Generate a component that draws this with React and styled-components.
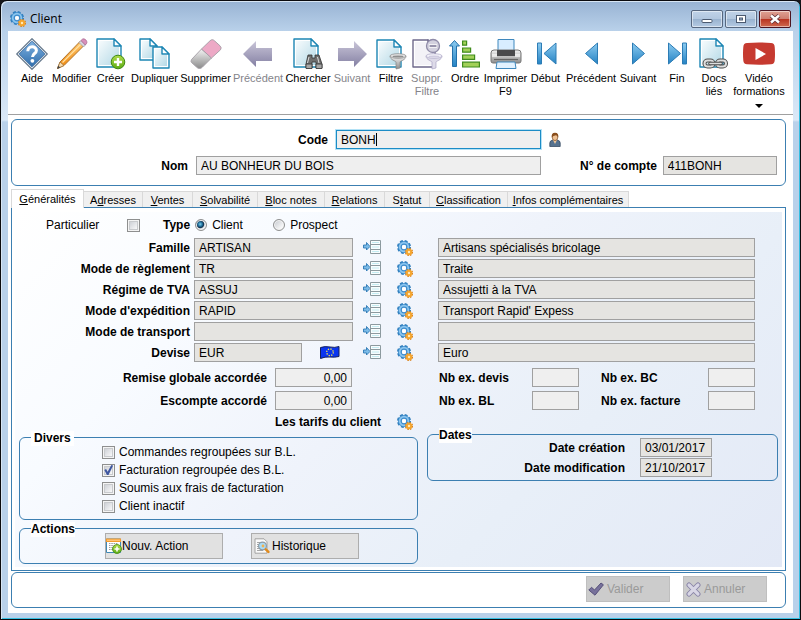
import React from "react";
import styled, { createGlobalStyle, css } from "styled-components";

const LINE = "#3c7fb1";

const GlobalStyle = createGlobalStyle`
  * { box-sizing: border-box; }
  html { background: #17171b; }
  body { margin: 0; font: 12px/14px "Liberation Sans", Arial, sans-serif; color: #000; }
  button, input { font: inherit; color: inherit; margin: 0; }
  svg { display: block; flex: none; }
`;

/* ---------- window frame ---------- */

const Frame = styled.div`
  min-height: 100vh;
  display: flex;
  flex-direction: column;
  padding: 0 6px 6px;
  border: 1px solid #0b0b0e;
  border-radius: 7px 7px 0 0;
  background: linear-gradient(#98b3d3 0, #b9d1ea 30px, #dae8f7 119px, #b9d1ea 121px);
  box-shadow: inset 1px 1px 0 #d8e6f4, inset -1px -1px 0 #35bfe2;
`;

const TitleBar = styled.header`
  display: flex;
  align-items: center;
  gap: 4px;
  height: 30px;
  padding: 6px 3px 0;
`;

const Title = styled.h1`
  flex: 1;
  margin: 0;
  font: 12px/16px "Open Sans", "Noto Sans", sans-serif;
`;

const CaptionButtons = styled.div`
  display: flex;
  gap: 2px;
`;

const CaptionButton = styled.button`
  display: grid;
  place-items: center;
  width: 32px;
  height: 18px;
  padding: 0;
  border: 1px solid ${(p) => (p.$close ? "#4c1420" : "#56677f")};
  border-radius: 2px;
  box-shadow: inset 0 0 0 1px rgba(255, 255, 255, 0.5);
  background: ${(p) =>
    p.$close
      ? "linear-gradient(#e0a193 0, #cf7f70 48%, #b8321f 50%, #cf6a4f 100%)"
      : "linear-gradient(#c0d3e8 0, #b2c7df 48%, #98b2cf 50%, #b4cae3 100%)"};
`;

const Client = styled.main`
  flex: 1;
  display: flex;
  flex-direction: column;
  margin: 0 1px;
  background: #fff;
`;

/* ---------- toolbar ---------- */

const Toolbar = styled.nav`
  display: flex;
  align-items: flex-start;
  min-height: 84px;
  padding: 7px 5px 0;
  border-bottom: 1px solid #a0a0a0;
`;

const Tool = styled.button`
  display: flex;
  flex-direction: column;
  align-items: center;
  flex: none;
  width: ${(p) => p.$w}px;
  padding: 0;
  border: 0;
  background: none;
  font-size: 11px;
  line-height: 13px;
  white-space: nowrap;
  &:disabled { color: #84848a; }
`;

const ToolLabel = styled.span`
  margin-top: 2px;
  white-space: pre-line;
`;

const DropArrow = styled.span`
  margin-top: 6px;
  border: 4px solid transparent;
  border-top-color: #000;
  border-bottom: 0;
`;

/* ---------- shared controls ---------- */

const Field = styled.input`
  display: block;
  width: ${(p) => (p.$w ? p.$w + "px" : "100%")};
  min-width: 0;
  height: 19px;
  padding: 0 4px;
  border: 1px solid #a0a0a0;
  border-radius: 0;
  outline: 0;
  background: ${(p) => (p.$locked ? "#e5e4e1" : "#efefef")};
  text-align: ${(p) => p.$align || "left"};
  ${(p) =>
    p.$active &&
    css`
      border-color: #1c8cc6;
      box-shadow: 0 0 0 1px #b4e2f6;
    `}
`;

const Caption = styled.label`
  width: ${(p) => (p.$w ? p.$w + "px" : "auto")};
  flex: none;
  font-weight: bold;
  text-align: ${(p) => p.$align || "right"};
  white-space: nowrap;
`;

const IconButton = styled.button`
  display: grid;
  place-items: center;
  padding: 0;
  border: 0;
  background: none;
`;

const Check = styled.input`
  appearance: none;
  flex: none;
  width: 13px;
  height: 13px;
  border: 1px solid #8e8f8f;
  background: linear-gradient(135deg, #c3c7cd, #f7f7f8 80%);
  box-shadow: inset 0 0 0 1px #f4f4f4, inset 0 0 0 2px #c8cacd;
  &:checked::before {
    content: "";
    display: block;
    width: 11px;
    height: 11px;
    background: #3f57a0;
    clip-path: polygon(12% 50%, 28% 42%, 42% 66%, 76% 4%, 92% 8%, 50% 96%, 36% 96%);
  }
`;

const Radio = styled.input`
  appearance: none;
  flex: none;
  width: 12px;
  height: 12px;
  border: 1px solid #8e8f8f;
  border-radius: 50%;
  background: linear-gradient(135deg, #c3c7cd, #fafafa 80%);
  box-shadow: inset 0 0 0 1px #f4f4f4;
  &:checked {
    background: radial-gradient(circle at 42% 42%, #7cd0ee 0, #1d6a96 28%, #12324d 42%, #e4e8ec 56%);
  }
`;

const Option = styled.label`
  display: flex;
  align-items: center;
  gap: 4px;
  height: 18px;
  white-space: nowrap;
`;

const PushButton = styled.button`
  display: flex;
  align-items: center;
  width: ${(p) => p.$w}px;
  height: 26px;
  gap: ${(p) => p.$gap || 0}px;
  padding: 0 0 0 ${(p) => p.$pad || 0}px;
  border: 1px solid #adadad;
  background: #e1e1e1;
  &:disabled {
    border-color: #bfbfbf;
    background: #ccc;
    color: #9a9a9a;
  }
`;

/* ---------- identity panel ---------- */

const Identity = styled.section`
  display: grid;
  gap: 7px;
  margin: 4px 7px 3px 3px;
  padding: 10px 8px 10px 0;
  border: 1px solid ${LINE};
  border-radius: 6px;
`;

const IdentityRow = styled.div`
  display: flex;
  align-items: center;
  gap: 8px;
`;

const Account = styled.div`
  display: flex;
  flex: 1;
  align-items: center;
  gap: 6px;
  margin-left: 31px;
`;

const CodeBox = styled.span`
  position: relative;
`;

const TextCursor = styled.span`
  position: absolute;
  left: 40px;
  top: 3px;
  width: 1px;
  height: 13px;
  background: #000;
`;

/* ---------- tabs ---------- */

const TabList = styled.div`
  display: flex;
  align-items: flex-end;
  margin: 0 7px 0 3px;
`;

const Tab = styled.button`
  width: ${(p) => p.$w}px;
  height: 16px;
  padding: 0;
  border: 1px solid #d9d9d9;
  border-width: 1px 1px 0 0;
  background: #f0f0f0;
  font-size: 11px;
  line-height: 14px;
  white-space: nowrap;
  &[aria-selected="true"] {
    position: relative;
    height: 19px;
    margin-bottom: -1px;
    border-left-width: 1px;
    background: #fff;
  }
`;

const Panel = styled.section`
  flex: 1;
  display: flex;
  margin: 0 7px 0 3px;
  padding: 4px 3px 3px;
  border: 1px solid ${LINE};
`;

const Sheet = styled.div`
  flex: 1;
  background: linear-gradient(135deg, #fff 0, #f8fbff 25%, #eff3fb 48%, #e8eff8 70%, #e3e9f6 100%);
`;

const KindRow = styled.div`
  display: flex;
  align-items: center;
  height: 20px;
  margin: 3px 0;
  padding-left: 31px;
`;

const Particular = styled.label`
  display: flex;
  align-items: center;
  justify-content: space-between;
  width: 94px;
  margin-right: 23px;
`;

const Kinds = styled.div`
  display: grid;
  grid-template-columns: 78px auto;
  margin-left: 5px;
  & > label { gap: 5px; }
`;

const Lookups = styled.div`
  display: grid;
  gap: 2px;
`;

const LookupRow = styled.div`
  display: grid;
  grid-template-columns: 175px 4px 159px 10px 18px 16px 16px 25px 1fr;
  align-items: center;
  padding-right: 27px;
  & > :nth-child(2) { grid-column: 3; }
  & > :nth-child(3) { grid-column: 5; }
  & > :nth-child(4) { grid-column: 7; }
  & > :nth-child(5) { grid-column: 9; }
`;

const CodeCell = styled.div`
  display: flex;
  align-items: center;
  gap: 18px;
`;

const Columns = styled.div`
  display: grid;
  grid-template-columns: 412px 1fr;
  align-items: start;
  padding-top: 6px;
`;

const Amounts = styled.div`
  display: grid;
  grid-template-columns: 252px 77px;
  gap: 4px 8px;
  align-items: center;
`;

const Prices = styled.div`
  display: flex;
  align-items: center;
  gap: 16px;
  height: 16px;
  margin: 4px 0 7px 260px;
`;

const Copies = styled.div`
  display: grid;
  grid-template-columns: 93px 47px 22px 1fr 47px;
  row-gap: 4px;
  align-items: center;
  margin: 0 27px 24px 12px;
  & > :nth-child(4n + 3) { grid-column: 4; }
`;

const Group = styled.fieldset`
  position: relative;
  min-width: 0;
  margin: 0 ${(p) => p.$right}px 8px ${(p) => p.$left || 0}px;
  padding: ${(p) => p.$pad};
  border: 1px solid ${LINE};
  border-radius: 6px;
  &:last-child { margin-bottom: 2px; }
`;

const Legend = styled.legend`
  position: absolute;
  top: -7px;
  left: 11px;
  padding: 0 ${(p) => (p.$flush ? 0 : 3)}px;
  background: #fff;
  font-weight: bold;
  line-height: 15px;
`;

const ButtonRow = styled.div`
  display: flex;
  gap: 28px;
`;

const DateGrid = styled.div`
  display: grid;
  grid-template-columns: auto 72px;
  justify-content: end;
  align-items: center;
  gap: 1px 15px;
`;

const Footer = styled.footer`
  display: flex;
  justify-content: flex-end;
  gap: 13px;
  margin: 1px 7px 5px 3px;
  padding: 3px 18px 5px;
  border: 1px solid ${LINE};
  border-radius: 6px;
`;

/* ---------- drawings ---------- */

const Gradients = styled.svg`
  position: absolute;
`;

function Defs() {
  const ramp = (id, a, b, diagonal) => (
    <linearGradient id={id} x1="0" y1="0" x2={diagonal ? 1 : 0} y2="1">
      <stop offset="0" stopColor={a} />
      <stop offset="1" stopColor={b} />
    </linearGradient>
  );
  return (
    <Gradients width="0" height="0" aria-hidden="true">
      <defs>
        {ramp("paper", "#f6fbfd", "#b4d9e6", true)}
        {ramp("sky", "#8ccbf0", "#2583c4")}
        {ramp("mauve", "#c9c5d8", "#8480a3")}
        {ramp("steel", "#f4f4f4", "#8b8b8b")}
        {ramp("leaf", "#b0dc4c", "#5cab14")}
        {ramp("diamond", "#7fb2e2", "#2f6dab")}
        {ramp("pencil", "#ffca72", "#ee8408")}
      </defs>
    </Gradients>
  );
}

const Svg32 = (props) => <svg width="32" height="32" viewBox="0 0 32 32" aria-hidden="true" {...props} />;

const Paper = ({ x = 0, y = 0, w = 24, h = 28, stroke = "#1d86b4", fill = "url(#paper)" }) => (
  <g stroke={stroke} strokeWidth="1.4" strokeLinejoin="round">
    <path d={`M${x} ${y}h${w - 7}l7 7v${h - 7}h${-w}z`} fill="#fff" />
    <path d={`M${x + 2} ${y + 2}h${w - 9}v6h5v${h - 10}h${4 - w}z`} fill={fill} stroke="none" />
    <path d={`M${x + w - 7} ${y}v7h7z`} fill="#fff" />
  </g>
);

const Funnel = ({ light }) => (
  <g stroke={light ? "#aaa5c4" : "#858585"} strokeWidth=".7">
    <path d="M15 18c0 4 6 5 6 6v7l4-1v-6c0-1 6-2 6-6z" fill={light ? "#dedbe9" : "url(#steel)"} />
    <ellipse cx="23" cy="18" rx="8" ry="2.3" fill={light ? "#f4f3fa" : "#e4e4e4"} />
    <ellipse cx="23" cy="18.4" rx="5.5" ry="1" fill={light ? "#d0cce0" : "#8f8f8f"} stroke="none" />
  </g>
);

const icons = {
  help: (
    <Svg32>
      <path d="M16 .8 31.2 16 16 31.2.8 16z" fill="#fff" stroke="#6d7f92" strokeLinejoin="round" strokeWidth="1.4" />
      <path d="M16 3.2 28.8 16 16 28.8 3.2 16z" fill="url(#diamond)" stroke="#3a6ea5" />
      <path d="M11.8 13.2c0-5.8 8.6-5.6 8.6-.8 0 3.2-3.9 3-3.9 6.6" fill="none" stroke="#fff" strokeWidth="3" />
      <circle cx="16.4" cy="22.8" r="1.9" fill="#fff" />
    </Svg32>
  ),
  edit: (
    <Svg32>
      <path d="M1.5 30.5 4 24 24 3.5l4 4L8 27.5z" fill="url(#pencil)" stroke="#a86a20" strokeWidth=".9" strokeLinejoin="round" />
      <path d="M6.5 24.5 25 6" stroke="#ffe0a0" strokeWidth="1.3" />
      <path d="M1.5 30.5 4 24l4 3.5z" fill="#f7dcb0" stroke="#94703e" strokeWidth=".7" />
      <path d="m1.2 30.8 1-3.2 2.1 2.1z" fill="#444" />
      <path d="m23 4.500 2-2 4.500 4.500-2 2z" fill="#d5d5df" stroke="#8d8d9b" strokeWidth=".6" />
      <path d="m25 2.500 1.400-1.300c2-1.500 5.600 2 4.200 4.200L29.300 7z" fill="#d890bb" stroke="#a2608a" strokeWidth=".7" />
    </Svg32>
  ),
  create: (
    <Svg32>
      <Paper x={2} y={1} />
      <circle cx="23" cy="24" r="6.8" fill="url(#leaf)" stroke="#3f8a12" />
      <path d="M23 20v8M19 24h8" stroke="#fff" strokeWidth="2.4" />
    </Svg32>
  ),
  duplicate: (
    <Svg32>
      <Paper x={1} y={1} w={17} h={21} />
      <Paper x={14} y={9} w={16} h={21} />
    </Svg32>
  ),
  erase: (
    <Svg32>
      <g strokeLinejoin="round" stroke="#a39da5" strokeWidth=".9">
        <path d="M1.5 21.5 11.5 11l10 9-9 9c-2 2-4 2-6 0l-5-4.5q-1-1 0-3z" fill="url(#steel)" />
        <path d="M11.5 11 20 2.8c1.5-1.5 3-1.5 4.5 0l5.500 5q2 2 .5 4l-9 8.200z" fill="#eda9c6" />
      </g>
    </Svg32>
  ),
  back: (
    <Svg32>
      <path d="M1 16 14 3v7h16v13H14v6z" fill="url(#mauve)" />
    </Svg32>
  ),
  forward: (
    <Svg32>
      <path d="M31 16 18 3v7H2v13h16v6z" fill="url(#mauve)" />
    </Svg32>
  ),
  search: (
    <Svg32>
      <Paper x={2} y={1} />
      <g fill="#6e6e6e" stroke="#333" strokeWidth=".8">
        <path d="M16 17h4v3h3v-3h4l3 9v4h-6v-6h-4v6h-6v-4z" />
        <path d="M14 26h6v4.500h-6zM24 26h6v4.500h-6z" fill="#a6a6a6" />
      </g>
      <path d="m17 19-1.500 6M25.500 19l1.500 6" stroke="#ddd" />
    </Svg32>
  ),
  filter: (
    <Svg32>
      <Paper x={2} y={2} w={24} h={27} />
      <Funnel />
    </Svg32>
  ),
  unfilter: (
    <Svg32>
      <Paper x={2} y={2} w={22} h={27} stroke="#6f6a8c" fill="#f3f2f7" />
      <Funnel light />
      <circle cx="22" cy="8" r="6.5" fill="#d3d1df" stroke="#8f8ba8" strokeWidth="1.3" />
      <path d="M18 8h8" stroke="#fff" strokeWidth="3.4" />
      <path d="M18.500 8h7" stroke="#7e7999" strokeWidth="1.6" />
    </Svg32>
  ),
  order: (
    <Svg32>
      <path d="M5.5 2.5 10.500 8h-3v20.500h-4V8h-3z" fill="url(#sky)" stroke="#2371ab" />
      <path
        d="M13.600 3h4v4.200h-4zM13.600 10h8v4.200h-8zM13.600 17h12v4.400h-12zM13.600 24.200h16.800V29H13.600z"
        fill="#a2d058"
        stroke="#3f8b1c"
        strokeWidth="1.2"
      />
    </Svg32>
  ),
  print: (
    <Svg32>
      <path d="M8 1.500h16V13H8z" fill="#d8edff" stroke="#3f88bd" />
      <path d="M4 12h24q3 0 3 3v8q0 2-2 2H3q-2 0-2-2v-8q0-3 3-3z" fill="url(#steel)" stroke="#777" />
      <path d="M7 12h18v6H7z" fill="#4a4a4c" />
      <path d="M2 16h5v3H2zM25 16h5v3h-5z" fill="#fff" opacity=".6" />
      <path d="M7 24h18l1 6.500H6z" fill="#e2f2ff" stroke="#3f88bd" />
      <path d="M4 21.500h24" stroke="#666" strokeWidth="1.2" />
    </Svg32>
  ),
  first: (
    <Svg32>
      <path d="M7.500 5h4v21h-4zM26 5v21L14 15.500z" fill="url(#sky)" stroke="#2c7cb5" />
    </Svg32>
  ),
  previous: (
    <Svg32>
      <path d="M22.500 5v21l-12-10.500z" fill="url(#sky)" stroke="#2c7cb5" />
    </Svg32>
  ),
  next: (
    <Svg32>
      <path d="M10.500 5v21l12-10.500z" fill="url(#sky)" stroke="#2c7cb5" />
    </Svg32>
  ),
  last: (
    <Svg32>
      <path d="M21.500 5h4v21h-4zM7.500 5v21l12-10.500z" fill="url(#sky)" stroke="#2c7cb5" />
    </Svg32>
  ),
  docs: (
    <Svg32>
      <Paper x={2} y={1} w={23} />
      <g fill="none" stroke="#4d4d4d" strokeWidth="4">
        <rect x="6.500" y="22.500" width="9" height="6" rx="3" />
        <rect x="19" y="22.500" width="9" height="6" rx="3" />
      </g>
      <g fill="none" stroke="#dedede" strokeWidth="2">
        <rect x="6.500" y="22.500" width="9" height="6" rx="3" />
        <rect x="19" y="22.500" width="9" height="6" rx="3" />
      </g>
      <path d="M12 25.500h11" stroke="#4d4d4d" strokeWidth="3.400" strokeLinecap="round" />
      <path d="M12 25.500h11" stroke="#dedede" strokeWidth="1.600" strokeLinecap="round" />
    </Svg32>
  ),
  video: (
    <Svg32>
      <path
        d="M4 5q12-1 24 0 3.500.2 3.700 4 .6 7 0 13.500Q31.500 26 28 26.300q-12 .8-24 0Q.5 26 .3 22.500-.3 16 .3 9 .500 5.200 4 5z"
        fill="#c63a30"
      />
      <path d="M12.500 10v12L23 16z" fill="#fff" />
    </Svg32>
  ),
};

const Gears = () => (
  <svg width="16" height="16" viewBox="0 0 16 16" aria-hidden="true">
    <circle cx="7" cy="7" r="5.9" fill="none" stroke="#2f7dbb" strokeWidth="2.2" strokeDasharray="2.8 1.83" />
    <circle cx="7" cy="7" r="4.1" fill="none" stroke="#3d8ccc" strokeWidth="3.8" />
    <circle cx="7" cy="7" r="4.3" fill="none" stroke="#8cc6ef" strokeWidth="1.7" />
    <circle cx="7" cy="7" r="2" fill="#fff" />
    <circle cx="12" cy="12" r="3.3" fill="none" stroke="#d9801a" strokeWidth="1.6" strokeDasharray="1.5 1.09" />
    <circle cx="12" cy="12" r="2.2" fill="#ffe9b8" stroke="#f5a52d" strokeWidth="2" />
  </svg>
);

const ListIcon = () => (
  <svg width="18" height="15" viewBox="0 0 18 15" aria-hidden="true">
    <path d="M.5 5h3V2.500L7 6.500 3.500 10V8h-3z" fill="#7dbce8" stroke="#2d78b4" strokeWidth=".9" />
    <path d="M7.500.5h10v13h-10z" fill="#f8fdfe" stroke="#8c9a9f" />
    <path d="M8 4.500h9M8 9.500h9" stroke="#8c9a9f" />
    <path d="M9 2.500h7M9 7h7M9 11.500h7" stroke="#c4ecf2" />
  </svg>
);

const EuFlag = () => (
  <svg width="20" height="13" viewBox="0 0 20 13" role="img" aria-label="Union européenne">
    <path d="M.5 1.500Q5 0 10 1t9-.5v10q-4 1-9 .5t-9.500 1.500z" fill="#0a35f0" stroke="#15205c" />
    <circle cx="10" cy="6.300" r="3.300" fill="none" stroke="#f5e34a" strokeWidth="1.300" strokeDasharray="1.300 1.290" />
  </svg>
);

const Person = () => (
  <svg width="12" height="16" viewBox="0 0 12 16" aria-hidden="true">
    <path d="M.8 14.500V11q0-2.500 3-3h4.400q3 .5 3 3v3.500z" fill="#56728f" stroke="#3a4c63" strokeWidth=".8" />
    <path d="m4 8 2 4 2-4z" fill="#f0c79c" />
    <ellipse cx="6" cy="5" rx="2.800" ry="3.600" fill="#efc193" stroke="#7a4a24" strokeWidth=".7" />
    <path d="M2.800 5.500Q2 .8 6 .8t3.200 4.700Q8.500 3.500 7 3.200q-3 .3-4.200 2.300z" fill="#8a4f1d" />
  </svg>
);

const CalendarPlus = () => (
  <svg width="16" height="16" viewBox="0 0 16 16" aria-hidden="true">
    <path d="M.5 1h14v13.500H.5z" fill="#fff" stroke="#3f87b5" />
    <path d="M0 .5h15V4H0z" fill="#f59b2d" />
    <path d="M1 2.200h13" stroke="#ffd79b" />
    <path d="M3 5.500h9M3 7.500h9M3 9.500h9M3 11.500h5" stroke="#9a9a9a" strokeDasharray="1.500 .8" />
    <circle cx="11" cy="11" r="4.500" fill="url(#leaf)" stroke="#3f8a12" strokeWidth=".8" />
    <path d="M11 8.500v5M8.500 11h5" stroke="#fff" strokeWidth="1.600" />
  </svg>
);

const Preview = () => (
  <svg width="16" height="16" viewBox="0 0 16 16" aria-hidden="true">
    <path d="M1 .8h9l3 3v11.400H1z" fill="#fafafa" stroke="#a2a2a2" />
    <path d="M3 4.500h3M3 6.500h2M3 8.500h2M3 10.500h2M3 12.500h6" stroke="#a6a6a6" />
    <circle cx="8.500" cy="8" r="3.900" fill="#a9dbf6" stroke="#8d9aa4" strokeWidth="1.200" />
    <circle cx="9" cy="8" r="1.400" fill="#f3b14e" />
    <path d="m11.800 11.300 2.600 2.600" stroke="#e08a1d" strokeWidth="2.400" strokeLinecap="round" />
  </svg>
);

const Tick = () => (
  <svg width="16" height="14" viewBox="0 0 16 14" aria-hidden="true">
    <path d="m.8 8 2.700-2.700L6.500 8 13 1l2.400 1.800L7 13.200z" fill="#77719b" stroke="#57517a" strokeLinejoin="round" />
  </svg>
);

const Cross = () => (
  <svg width="15" height="15" viewBox="0 0 15 15" aria-hidden="true">
    <path d="m3 3 9 9M12 3l-9 9" stroke="#8782a6" strokeWidth="5" strokeLinecap="round" />
    <path d="m3 3 9 9M12 3l-9 9" stroke="#d8d6e5" strokeWidth="3.200" strokeLinecap="round" />
  </svg>
);

const CaptionGlyph = ({ kind }) => (
  <svg width="12" height="10" viewBox="0 0 12 10" aria-hidden="true">
    {kind === "min" && <rect x="1" y="5.500" width="10" height="3" rx="1" fill="#fff" stroke="#4b5a70" />}
    {kind === "max" && (
      <>
        <rect x="1.500" y="1.500" width="9" height="7" fill="#fff" stroke="#4b5a70" />
        <rect x="4.500" y="4" width="3" height="2" fill="#9db5d2" stroke="#4b5a70" />
      </>
    )}
    {kind === "close" && (
      <>
        <path d="m2 1.500 8 7M10 1.500l-8 7" stroke="#5b3038" strokeWidth="4" />
        <path d="m2 1.500 8 7M10 1.500l-8 7" stroke="#fff" strokeWidth="2.400" />
      </>
    )}
  </svg>
);

/* ---------- data ---------- */

const tools = [
  { icon: "help", label: "Aide", w: 38 },
  { icon: "edit", label: "Modifier", w: 41 },
  { icon: "create", label: "Créer", w: 37 },
  { icon: "duplicate", label: "Dupliquer", w: 51 },
  { icon: "erase", label: "Supprimer", w: 51 },
  { icon: "back", label: "Précédent", w: 54, off: true },
  { icon: "search", label: "Chercher", w: 46 },
  { icon: "forward", label: "Suivant", w: 42, off: true },
  { icon: "filter", label: "Filtre", w: 36 },
  { icon: "unfilter", label: "Suppr.\nFiltre", w: 36, off: true },
  { icon: "order", label: "Ordre", w: 40 },
  { icon: "print", label: "Imprimer\nF9", w: 41 },
  { icon: "first", label: "Début", w: 39 },
  { icon: "previous", label: "Précédent", w: 52 },
  { icon: "next", label: "Suivant", w: 42 },
  { icon: "last", label: "Fin", w: 36 },
  { icon: "docs", label: "Docs\nliés", w: 38 },
  { icon: "video", label: "Vidéo\nformations", w: 52, menu: true },
];

const tabs = [
  { text: "Généralités", key: 0, w: 73 },
  { text: "Adresses", key: 1, w: 59 },
  { text: "Ventes", key: 0, w: 50 },
  { text: "Solvabilité", key: 0, w: 65 },
  { text: "Bloc notes", key: 0, w: 67 },
  { text: "Relations", key: 0, w: 60 },
  { text: "Statut", key: 1, w: 45 },
  { text: "Classification", key: 0, w: 78 },
  { text: "Infos complémentaires", key: 0, w: 121 },
];

const lookups = [
  { id: "famille", label: "Famille", code: "ARTISAN", text: "Artisans spécialisés bricolage" },
  { id: "reglement", label: "Mode de règlement", code: "TR", text: "Traite" },
  { id: "tva", label: "Régime de TVA", code: "ASSUJ", text: "Assujetti à la TVA" },
  { id: "expedition", label: "Mode d'expédition", code: "RAPID", text: "Transport Rapid' Expess" },
  { id: "transport", label: "Mode de transport", code: "", text: "" },
  { id: "devise", label: "Devise", code: "EUR", text: "Euro", flag: true },
];

const copies = [
  { id: "nb-devis", label: "Nb ex. devis" },
  { id: "nb-bc", label: "Nb ex. BC" },
  { id: "nb-bl", label: "Nb ex. BL" },
  { id: "nb-facture", label: "Nb ex. facture" },
];

const options = [
  { label: "Commandes regroupées sur B.L." },
  { label: "Facturation regroupée des B.L.", on: true },
  { label: "Soumis aux frais de facturation" },
  { label: "Client inactif" },
];

/* ---------- page ---------- */

export default function App() {
  return (
    <Frame>
      <GlobalStyle />
      <Defs />
      <TitleBar>
        <Gears />
        <Title>Client</Title>
        <CaptionButtons>
          <CaptionButton aria-label="Réduire"><CaptionGlyph kind="min" /></CaptionButton>
          <CaptionButton aria-label="Agrandir"><CaptionGlyph kind="max" /></CaptionButton>
          <CaptionButton aria-label="Fermer" $close><CaptionGlyph kind="close" /></CaptionButton>
        </CaptionButtons>
      </TitleBar>

      <Client>
        <Toolbar>
          {tools.map((t, i) => (
            <Tool key={i} $w={t.w} disabled={t.off}>
              {icons[t.icon]}
              <ToolLabel>{t.label}</ToolLabel>
              {t.menu && <DropArrow />}
            </Tool>
          ))}
        </Toolbar>

        <Identity>
          <IdentityRow>
            <Caption htmlFor="code" $w={316}>Code</Caption>
            <CodeBox>
              <Field id="code" defaultValue="BONH" $w={205} $active />
              <TextCursor />
            </CodeBox>
            <IconButton aria-label="Contact"><Person /></IconButton>
          </IdentityRow>
          <IdentityRow>
            <Caption htmlFor="nom" $w={176}>Nom</Caption>
            <Field id="nom" defaultValue="AU BONHEUR DU BOIS" $w={345} />
            <Account>
              <Caption htmlFor="compte">N° de compte</Caption>
              <Field id="compte" defaultValue="411BONH" $locked readOnly />
            </Account>
          </IdentityRow>
        </Identity>

        <TabList role="tablist">
          {tabs.map((t, i) => (
            <Tab key={t.text} role="tab" aria-selected={i === 0} $w={t.w}>
              {t.text.slice(0, t.key)}
              <u>{t.text[t.key]}</u>
              {t.text.slice(t.key + 1)}
            </Tab>
          ))}
        </TabList>

        <Panel role="tabpanel">
          <Sheet>
            <KindRow>
              <Particular>
                Particulier
                <Check type="checkbox" />
              </Particular>
              <Caption as="span">Type</Caption>
              <Kinds>
                <Option><Radio type="radio" name="type" defaultChecked />Client</Option>
                <Option><Radio type="radio" name="type" />Prospect</Option>
              </Kinds>
            </KindRow>

            <Lookups>
              {lookups.map((l) => (
                <LookupRow key={l.id}>
                  <Caption htmlFor={l.id}>{l.label}</Caption>
                  <CodeCell>
                    <Field id={l.id} defaultValue={l.code} $locked readOnly $w={l.flag ? 108 : 159} />
                    {l.flag && <EuFlag />}
                  </CodeCell>
                  <IconButton aria-label={"Liste " + l.label}><ListIcon /></IconButton>
                  <IconButton aria-label={"Gérer " + l.label}><Gears /></IconButton>
                  <Field aria-label={"Libellé " + l.label} defaultValue={l.text} $locked readOnly />
                </LookupRow>
              ))}
            </Lookups>

            <Columns>
              <div>
                <Amounts>
                  <Caption htmlFor="remise">Remise globale accordée</Caption>
                  <Field id="remise" defaultValue="0,00" $align="right" />
                  <Caption htmlFor="escompte">Escompte accordé</Caption>
                  <Field id="escompte" defaultValue="0,00" $align="right" />
                </Amounts>
                <Prices>
                  <Caption as="span">Les tarifs du client</Caption>
                  <IconButton aria-label="Les tarifs du client"><Gears /></IconButton>
                </Prices>
                <Group $left={4} $right={9} $pad="5px 0 4px 82px">
                  <Legend>Divers</Legend>
                  {options.map((o) => (
                    <Option key={o.label}>
                      <Check type="checkbox" defaultChecked={o.on} />
                      {o.label}
                    </Option>
                  ))}
                </Group>
                <Group $left={4} $right={9} $pad="4px 0 4px 85px">
                  <Legend $flush>Actions</Legend>
                  <ButtonRow>
                    <PushButton $w={118}><CalendarPlus />Nouv. Action</PushButton>
                    <PushButton $w={108} $pad={2} $gap={2}><Preview />Historique</PushButton>
                  </ButtonRow>
                </Group>
              </div>
              <div>
                <Copies>
                  {copies.map((c) => (
                    <React.Fragment key={c.id}>
                      <Caption htmlFor={c.id} $align="left">{c.label}</Caption>
                      <Field id={c.id} />
                    </React.Fragment>
                  ))}
                </Copies>
                <Group $right={4} $pad="3px 65px 3px 0">
                  <Legend $flush>Dates</Legend>
                  <DateGrid>
                    <Caption htmlFor="creation">Date création</Caption>
                    <Field id="creation" defaultValue="03/01/2017" $locked readOnly />
                    <Caption htmlFor="modification">Date modification</Caption>
                    <Field id="modification" defaultValue="21/10/2017" $locked readOnly />
                  </DateGrid>
                </Group>
              </div>
            </Columns>
          </Sheet>
        </Panel>

        <Footer>
          <PushButton disabled $w={84} $pad={1} $gap={3}><Tick />Valider</PushButton>
          <PushButton disabled $w={84} $pad={2} $gap={3}><Cross />Annuler</PushButton>
        </Footer>
      </Client>
    </Frame>
  );
}
